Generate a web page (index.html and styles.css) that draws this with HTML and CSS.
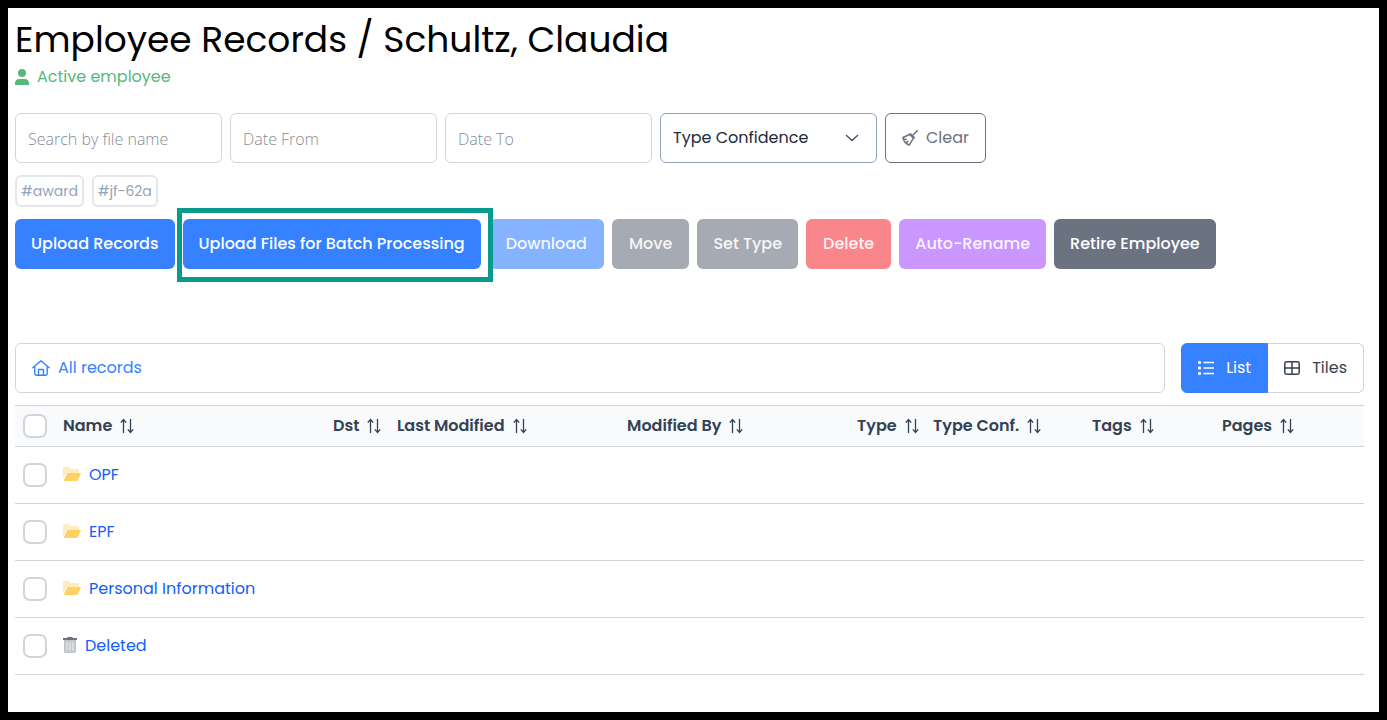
FILE: index.html
```html
<!DOCTYPE html>
<html lang="en">
<head>
<meta charset="utf-8">
<title>Employee Records</title>
<link rel="stylesheet" href="styles.css">
</head>
<body>
<svg class="sprite" aria-hidden="true">
  <symbol id="sort" viewBox="0 0 14 16">
    <path d="M3.500 15V2M.8 4.600 3.500 1.500l2.700 3.100M10.500 1v13M7.800 11.400l2.700 3.100 2.700-3.100" fill="none" stroke="currentColor" stroke-width="1.300"/>
  </symbol>
  <symbol id="folder" viewBox="0 0 18 14">
    <path d="M0 12V1.500Q0 0 1.500 0H6l2 2h6.500Q16 2 16 3.500V6H4.500Q3.500 6 3 7z" fill="#feebc0"/>
    <path d="M.5 14 4 6.800Q4.400 6 5.300 6H17q1.300 0 .8 1L14.800 13q-.5 1-1.500 1z" fill="#fdd164"/>
  </symbol>
</svg>
<main class="page">
  <header>
    <h1 class="title">Employee Records / Schultz, Claudia</h1>
    <p class="status">
      <svg width="14" height="16" viewBox="0 0 14 16"><circle cx="7" cy="4" r="4" fill="currentColor"/><path d="M0 16v-1.500Q0 10 4.500 10h5Q14 10 14 14.500V16z" fill="currentColor"/></svg>
      Active employee
    </p>
  </header>

  <form class="filters">
    <input class="field" type="text" placeholder="Search by file name" aria-label="Search by file name">
    <input class="field" type="text" placeholder="Date From" aria-label="Date From">
    <input class="field" type="text" placeholder="Date To" aria-label="Date To">
    <div class="select-wrap">
      <select class="select" aria-label="Type Confidence"><option>Type Confidence</option></select>
      <svg class="chevron" width="14" height="8" viewBox="0 0 14 8"><path d="m1.500 1.500 5.500 5 5.500-5" fill="none" stroke="currentColor" stroke-width="1.500" stroke-linecap="round" stroke-linejoin="round"/></svg>
    </div>
    <button class="clear" type="button">
      <svg width="16" height="16" viewBox="0 0 16 16" fill="none" stroke="currentColor" stroke-width="1.500" stroke-linecap="round" stroke-linejoin="round"><path d="M15.300.7 11 5"/><path d="m8.300 4.300 3.400 3.400" stroke-width="2.400"/><path d="M7.500 4.500.9 7.500q1 5.300 6.300 7.600l4.200-7M1.500 9l2.600.2M4.200 13l1.600-1.600"/></svg>
      Clear
    </button>
  </form>

  <div class="tags">
    <button class="tag" type="button">#award</button>
    <button class="tag" type="button">#jf-62a</button>
  </div>

  <div class="actions">
    <button class="btn blue" type="button">Upload Records</button>
    <div class="spotlight"><button class="btn blue" type="button">Upload Files for Batch Processing</button></div>
    <button class="btn roomy blue-off" type="button" disabled>Download</button>
    <button class="btn roomy gray-off" type="button" disabled>Move</button>
    <button class="btn gray-off" type="button" disabled>Set Type</button>
    <button class="btn roomy red-off" type="button" disabled>Delete</button>
    <button class="btn purple-off" type="button" disabled>Auto-Rename</button>
    <button class="btn slate" type="button">Retire Employee</button>
  </div>

  <div class="toolbar">
    <nav class="crumbs" aria-label="Breadcrumb">
      <a href="#">
        <svg width="18" height="16" viewBox="0 0 18 16" fill="none" stroke="currentColor" stroke-width="1.400" stroke-linecap="round" stroke-linejoin="round"><path d="M.8 7.700 9 .8l8.200 6.900M2.800 6.500v7.300q0 1.400 1.400 1.400h9.600q1.400 0 1.400-1.400V6.500M6.500 15V9.500h5V15"/></svg>
        All records
      </a>
    </nav>
    <div class="views">
      <button class="view active" type="button">
        <svg width="16" height="14" viewBox="0 0 16 14" fill="currentColor"><rect width="3" height="3" rx="1"/><rect y="5.500" width="3" height="3" rx="1"/><rect y="11" width="3" height="3" rx="1"/><path d="M5.500.8H16v1.400H5.500zM5.500 6.300H16v1.400H5.500zM5.500 11.800H16v1.400H5.500z"/></svg>
        List
      </button>
      <button class="view" type="button">
        <svg width="16" height="14" viewBox="0 0 16 14" fill="none" stroke="currentColor" stroke-width="1.500"><rect x=".8" y=".8" width="14.400" height="12.400" rx="1.600"/><path d="M8 1v12M1 7h14"/></svg>
        Tiles
      </button>
    </div>
  </div>

  <table class="records">
    <colgroup><col class="c-check"><col><col class="c-dst"><col class="c-mod"><col class="c-mod"><col class="c-type"><col class="c-conf"><col class="c-tags"><col class="c-pages"></colgroup>
    <thead>
      <tr>
        <th><input class="check" type="checkbox" aria-label="Select all"></th>
        <th><button class="sort" type="button">Name <svg width="14" height="16"><use href="#sort"/></svg></button></th>
        <th><button class="sort" type="button">Dst <svg width="14" height="16"><use href="#sort"/></svg></button></th>
        <th><button class="sort" type="button">Last Modified <svg width="14" height="16"><use href="#sort"/></svg></button></th>
        <th><button class="sort" type="button">Modified By <svg width="14" height="16"><use href="#sort"/></svg></button></th>
        <th><button class="sort" type="button">Type <svg width="14" height="16"><use href="#sort"/></svg></button></th>
        <th><button class="sort" type="button">Type Conf. <svg width="14" height="16"><use href="#sort"/></svg></button></th>
        <th><button class="sort" type="button">Tags <svg width="14" height="16"><use href="#sort"/></svg></button></th>
        <th><button class="sort" type="button">Pages <svg width="14" height="16"><use href="#sort"/></svg></button></th>
      </tr>
    </thead>
    <tbody>
      <tr>
        <td><input class="check" type="checkbox" aria-label="Select OPF"></td>
        <td colspan="8"><a class="item" href="#"><svg width="18" height="14"><use href="#folder"/></svg>OPF</a></td>
      </tr>
      <tr>
        <td><input class="check" type="checkbox" aria-label="Select EPF"></td>
        <td colspan="8"><a class="item" href="#"><svg width="18" height="14"><use href="#folder"/></svg>EPF</a></td>
      </tr>
      <tr>
        <td><input class="check" type="checkbox" aria-label="Select Personal Information"></td>
        <td colspan="8"><a class="item" href="#"><svg width="18" height="14"><use href="#folder"/></svg>Personal Information</a></td>
      </tr>
      <tr>
        <td><input class="check" type="checkbox" aria-label="Select Deleted"></td>
        <td colspan="8"><a class="item" href="#"><svg width="14" height="16" viewBox="0 0 14 16"><path d="M1 3h12v11.500q0 1.500-1.500 1.500h-9Q1 16 1 14.500z" fill="#c3c6cb"/><path d="M4 5v8.500M7 5v8.500M10 5v8.500" stroke="#eceef0" stroke-width="1.200"/><path d="M0 1h4q.4-1 1.200-1h3.600q.8 0 1.200 1h4v2H0z" fill="#6b7280"/></svg>Deleted</a></td>
      </tr>
    </tbody>
  </table>
</main>
</body>
</html>
```

FILE: styles.css
```css
* { box-sizing: border-box; }

body {
  margin: 0;
  background: #000;
  color: #000;
  font: 400 16px/24px Poppins, Inter, sans-serif;
}

button, input, select { font: inherit; }
button, select { cursor: pointer; }
a { text-decoration: none; }
svg { flex: none; }

.sprite { display: none; }

.page {
  min-height: calc(100vh - 16px);
  margin: 8px;
  padding: 12px 15px 24px 7px;
  background: #fff;
}

.title {
  margin: 0;
  font-size: 36px;
  font-weight: 400;
  line-height: 40px;
}

.status {
  display: flex;
  align-items: center;
  gap: 8px;
  margin: 5px 0 0;
  color: #57b87c;
}

.filters, .tags, .actions { display: flex; gap: 8px; }

.filters { margin-top: 24px; }

.field, .select, .clear {
  height: 50px;
  border: 1px solid #d1d5db;
  border-radius: 6px;
  background: #fff;
}

.field {
  width: 207px;
  padding: 2px 12px 0;
  font-family: "Open Sans", sans-serif;
}

.field::placeholder { color: #858b96; font-weight: 300; opacity: 1; }

.select-wrap { position: relative; width: 217px; }

.select {
  width: 100%;
  padding: 0 40px 0 12px;
  border-color: #94a3b8;
  color: #1e293b;
  appearance: none;
}

.chevron {
  position: absolute;
  top: 21px;
  right: 18px;
  color: #475569;
  pointer-events: none;
}

.clear {
  display: flex;
  align-items: center;
  gap: 8px;
  padding: 0 16px;
  border-color: #6b7280;
  color: #6b7280;
}

.tags { margin-top: 12px; }

.tag {
  height: 32px;
  padding: 0 4px;
  border: 2px solid #e5e7eb;
  border-radius: 6px;
  background: #fff;
  color: #94a3b8;
  font-size: 14px;
}

.actions { margin-top: 12px; }

.btn {
  height: 50px;
  padding: 0 16px;
  border: 0;
  border-radius: 6px;
  color: #fff;
  font-weight: 500;
  white-space: nowrap;
}

.btn:disabled { color: rgba(255, 255, 255, .92); cursor: default; }

.roomy { padding: 0 17px; }

.blue { background: #3581ff; }
.blue-off { background: #85b3ff; }
.gray-off { background: #a6aab3; }
.red-off { background: #f8868b; }
.purple-off { background: #c997ff; }
.slate { background: #6b7280; }

.spotlight { position: relative; }

.spotlight::after {
  content: "";
  position: absolute;
  inset: -11px -12px -13px -6px;
  z-index: 1;
  border: 5px solid #089b8d;
  background: linear-gradient(#fff, #fff) right / 7px 100% no-repeat;
  pointer-events: none;
}

.toolbar { display: flex; gap: 16px; margin-top: 74px; }

.crumbs {
  display: flex;
  flex: 1;
  align-items: center;
  height: 50px;
  padding: 0 16px;
  border: 1px solid #d1d5db;
  border-radius: 6px;
}

.crumbs a { display: flex; align-items: center; gap: 8px; color: #3581ff; }

.views { display: flex; }

.view {
  display: flex;
  align-items: center;
  gap: 12px;
  height: 50px;
  padding: 0 16px;
  border: 1px solid #d1d5db;
  border-left: 0;
  border-radius: 0 6px 6px 0;
  background: #fff;
  color: #374151;
}

.view.active {
  border: 1px solid #3581ff;
  border-radius: 6px 0 0 6px;
  background: #3581ff;
  color: #fff;
}

.records {
  width: 100%;
  margin-top: 12px;
  border-collapse: collapse;
  table-layout: fixed;
}

.c-check { width: 40px; }
.c-dst { width: 64px; }
.c-mod { width: 230px; }
.c-type { width: 76px; }
.c-conf { width: 159px; }
.c-tags { width: 130px; }
.c-pages { width: 150px; }

th, td {
  padding: 0 8px;
  border-bottom: 1px solid #d1d5db;
  text-align: left;
}

th { height: 41px; border-top: 1px solid #d1d5db; background: #f9fafb; }
td { height: 57px; }

.sort {
  display: flex;
  align-items: center;
  gap: 8px;
  padding: 0;
  border: 0;
  background: none;
  color: #334155;
  font-weight: 600;
  white-space: nowrap;
}

.check {
  display: block;
  width: 24px;
  height: 24px;
  margin: 0;
  border: 2px solid #d1d5db;
  border-radius: 7px;
  background: #fff;
  appearance: none;
}

.check:checked { border-color: #3581ff; background: #3581ff; }

.item { display: flex; align-items: center; gap: 8px; width: fit-content; color: #155dfc; }
.item svg { margin-bottom: 2px; }
```
